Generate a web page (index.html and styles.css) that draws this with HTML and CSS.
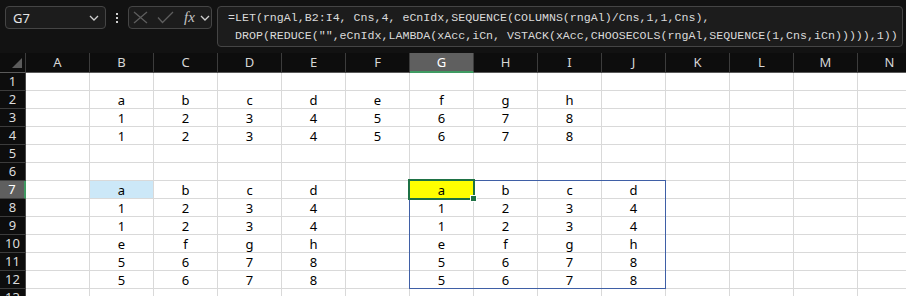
FILE: index.html
```html
<!DOCTYPE html>
<html lang="en">
<head>
    <meta charset="UTF-8">
    <title>Sheet</title>
    <link rel="stylesheet" href="styles.css">
</head>
<body>
    <div class="topbar">
        <div class="namebox">
            <span>G7</span>
            <svg class="chev" width="10" height="6" viewBox="0 0 10 6"><polyline points="1,1 5,5 9,1" fill="none" stroke="#cfcfcf" stroke-width="1.3"/></svg>
        </div>
        <div class="dots"><i></i><i></i><i></i></div>
        <div class="fxbox">
            <svg width="15" height="13" viewBox="0 0 15 13"><path d="M1 1 L14 12 M14 1 L1 12" stroke="#5e5e5e" stroke-width="1.3" fill="none"/></svg>
            <svg width="17" height="13" viewBox="0 0 17 13"><polyline points="1,6.5 5.5,11.5 16,1" stroke="#5e5e5e" stroke-width="1.3" fill="none"/></svg>
            <span class="fx">fx</span>
            <svg width="10" height="6" viewBox="0 0 10 6"><polyline points="1,1 5,5 9,1" fill="none" stroke="#cfcfcf" stroke-width="1.3"/></svg>
        </div>
        <div class="formula">
            <div class="fline">=LET(rngAl,B2:I4, Cns,4, eCnIdx,SEQUENCE(COLUMNS(rngAl)/Cns,1,1,Cns),</div>
            <div class="fline"> DROP(REDUCE("",eCnIdx,LAMBDA(xAcc,iCn, VSTACK(xAcc,CHOOSECOLS(rngAl,SEQUENCE(1,Cns,iCn))))),1))</div>
        </div>
    </div>

    <div class="sheet">
        <div class="corner"><span></span></div>
        <div class="ch">A</div><div class="ch">B</div><div class="ch">C</div><div class="ch">D</div><div class="ch">E</div><div class="ch">F</div><div class="ch active">G</div><div class="ch">H</div><div class="ch">I</div><div class="ch">J</div><div class="ch">K</div><div class="ch">L</div><div class="ch">M</div><div class="ch">N</div>

        <div class="rh">1</div><div class="c"></div><div class="c"></div><div class="c"></div><div class="c"></div><div class="c"></div><div class="c"></div><div class="c"></div><div class="c"></div><div class="c"></div><div class="c"></div><div class="c"></div><div class="c"></div><div class="c"></div><div class="c"></div>
        <div class="rh">2</div><div class="c"></div><div class="c">a</div><div class="c">b</div><div class="c">c</div><div class="c">d</div><div class="c">e</div><div class="c">f</div><div class="c">g</div><div class="c">h</div><div class="c"></div><div class="c"></div><div class="c"></div><div class="c"></div><div class="c"></div>
        <div class="rh">3</div><div class="c"></div><div class="c">1</div><div class="c">2</div><div class="c">3</div><div class="c">4</div><div class="c">5</div><div class="c">6</div><div class="c">7</div><div class="c">8</div><div class="c"></div><div class="c"></div><div class="c"></div><div class="c"></div><div class="c"></div>
        <div class="rh">4</div><div class="c"></div><div class="c">1</div><div class="c">2</div><div class="c">3</div><div class="c">4</div><div class="c">5</div><div class="c">6</div><div class="c">7</div><div class="c">8</div><div class="c"></div><div class="c"></div><div class="c"></div><div class="c"></div><div class="c"></div>
        <div class="rh">5</div><div class="c"></div><div class="c"></div><div class="c"></div><div class="c"></div><div class="c"></div><div class="c"></div><div class="c"></div><div class="c"></div><div class="c"></div><div class="c"></div><div class="c"></div><div class="c"></div><div class="c"></div><div class="c"></div>
        <div class="rh">6</div><div class="c"></div><div class="c"></div><div class="c"></div><div class="c"></div><div class="c"></div><div class="c"></div><div class="c"></div><div class="c"></div><div class="c"></div><div class="c"></div><div class="c"></div><div class="c"></div><div class="c"></div><div class="c"></div>
        <div class="rh active">7</div><div class="c"></div><div class="c blue">a</div><div class="c">b</div><div class="c">c</div><div class="c">d</div><div class="c"></div><div class="c yellow">a</div><div class="c">b</div><div class="c">c</div><div class="c">d</div><div class="c"></div><div class="c"></div><div class="c"></div><div class="c"></div>
        <div class="rh">8</div><div class="c"></div><div class="c">1</div><div class="c">2</div><div class="c">3</div><div class="c">4</div><div class="c"></div><div class="c">1</div><div class="c">2</div><div class="c">3</div><div class="c">4</div><div class="c"></div><div class="c"></div><div class="c"></div><div class="c"></div>
        <div class="rh">9</div><div class="c"></div><div class="c">1</div><div class="c">2</div><div class="c">3</div><div class="c">4</div><div class="c"></div><div class="c">1</div><div class="c">2</div><div class="c">3</div><div class="c">4</div><div class="c"></div><div class="c"></div><div class="c"></div><div class="c"></div>
        <div class="rh">10</div><div class="c"></div><div class="c">e</div><div class="c">f</div><div class="c">g</div><div class="c">h</div><div class="c"></div><div class="c">e</div><div class="c">f</div><div class="c">g</div><div class="c">h</div><div class="c"></div><div class="c"></div><div class="c"></div><div class="c"></div>
        <div class="rh">11</div><div class="c"></div><div class="c">5</div><div class="c">6</div><div class="c">7</div><div class="c">8</div><div class="c"></div><div class="c">5</div><div class="c">6</div><div class="c">7</div><div class="c">8</div><div class="c"></div><div class="c"></div><div class="c"></div><div class="c"></div>
        <div class="rh">12</div><div class="c"></div><div class="c">5</div><div class="c">6</div><div class="c">7</div><div class="c">8</div><div class="c"></div><div class="c">5</div><div class="c">6</div><div class="c">7</div><div class="c">8</div><div class="c"></div><div class="c"></div><div class="c"></div><div class="c"></div>
        <div class="rh">13</div><div class="c"></div><div class="c"></div><div class="c"></div><div class="c"></div><div class="c"></div><div class="c"></div><div class="c"></div><div class="c"></div><div class="c"></div><div class="c"></div><div class="c"></div><div class="c"></div><div class="c"></div><div class="c"></div>

        <!-- spill range + active cell overlays -->
        <div class="spill"></div>
        <div class="selection"></div>
        <div class="handle"></div>
    </div>
</body>
</html>
```

FILE: styles.css
```css
:root {
    --bar-bg: #121212;
    --box-bg: #1c1c1c;
    --box-border: #454545;
    --head-bg: #0d0d0d;
    --head-line: #3c3c3c;
    --grid-line: #d9d9d9;
    --active-head: #5f5f5f;
    --green: #1e7145;
    --spill: #3f5fa6;
}

* {
    margin: 0;
    padding: 0;
    box-sizing: border-box;
}

body {
    width: 906px;
    height: 296px;
    overflow: hidden;
    background: var(--bar-bg);
    font-family: "Noto Sans", "Liberation Sans", sans-serif;
}

/* formula bar row */
.topbar {
    height: 53px;
    display: flex;
    align-items: flex-start;
    padding: 6px 0 0 5px;
}

.namebox {
    width: 101px;
    height: 23px;
    border: 1px solid var(--box-border);
    border-radius: 4px;
    background: var(--box-bg);
    display: flex;
    align-items: center;
    justify-content: space-between;
    padding: 0 6px 0 7px;
    color: #e6e6e6;
    font-size: 13px;
}

.dots {
    width: 22px;
    height: 23px;
    display: flex;
    flex-direction: column;
    align-items: center;
    justify-content: center;
    gap: 2px;
}

.dots i {
    width: 2px;
    height: 2px;
    background: #cfcfcf;
}

.fxbox {
    width: 84px;
    height: 23px;
    border: 1px solid var(--box-border);
    border-radius: 4px;
    background: var(--box-bg);
    display: flex;
    align-items: center;
    padding: 0 0 0 4px;
    gap: 9px;
}

.fxbox .fx {
    font-family: "Liberation Serif", serif;
    font-style: italic;
    font-size: 15px;
    color: #c4c4c4;
    margin-left: 1px;
    margin-right: -4px;
}

.formula {
    margin-left: 5px;
    width: 686px;
    height: 41px;
    border: 1px solid var(--box-border);
    border-radius: 4px;
    background: var(--box-bg);
    padding: 2px 0 0 10px;
    font-family: "Liberation Mono", monospace;
    font-size: 11.63px;
    line-height: 17.5px;
    color: #dadada;
    overflow: hidden;
}

.fline {
    white-space: pre;
}

/* worksheet grid */
.sheet {
    position: relative;
    display: grid;
    grid-template-columns: 26px repeat(14, 64px);
    grid-template-rows: 20px;
    grid-auto-rows: 18px;
    background: #fff;
}

.corner,
.ch {
    background: var(--head-bg);
    border-bottom: 1px solid #5a5a5a;
}

.corner {
    position: relative;
    border-right: 1px solid var(--head-line);
}

.corner span {
    position: absolute;
    right: 3px;
    bottom: 4px;
    width: 0;
    height: 0;
    border-left: 10px solid transparent;
    border-bottom: 10px solid #5c5c5c;
}

.ch {
    border-right: 1px solid var(--head-line);
    color: #d6d6d6;
    font-size: 13px;
    line-height: 18px;
    text-align: center;
}

.ch.active {
    background: var(--active-head);
    color: #fff;
    border-bottom: 2px solid #3f9a62;
}

.rh {
    background: var(--head-bg);
    border-right: 1px solid #4a4a4a;
    border-bottom: 1px solid var(--head-line);
    color: #dcdcdc;
    font-size: 13px;
    line-height: 17px;
    text-align: center;
}

.rh.active {
    background: var(--active-head);
    color: #fff;
    border-right: 2px solid #3f9a62;
}

.c {
    border-right: 1px solid var(--grid-line);
    border-bottom: 1px solid var(--grid-line);
    color: #000;
    font-size: 13px;
    line-height: 17px;
    padding-top: 1px;
    text-align: center;
}

.c.blue {
    background: #cce8f8;
}

.c.yellow {
    background: #ffff00;
}

.spill {
    position: absolute;
    left: 409px;
    top: 127px;
    width: 257px;
    height: 109px;
    border: 1px solid var(--spill);
}

.selection {
    position: absolute;
    left: 408px;
    top: 126px;
    width: 67px;
    height: 21px;
    border: 2px solid var(--green);
}

.handle {
    position: absolute;
    left: 470px;
    top: 142px;
    width: 7px;
    height: 7px;
    background: var(--green);
    border: 1px solid #fff;
}
```
